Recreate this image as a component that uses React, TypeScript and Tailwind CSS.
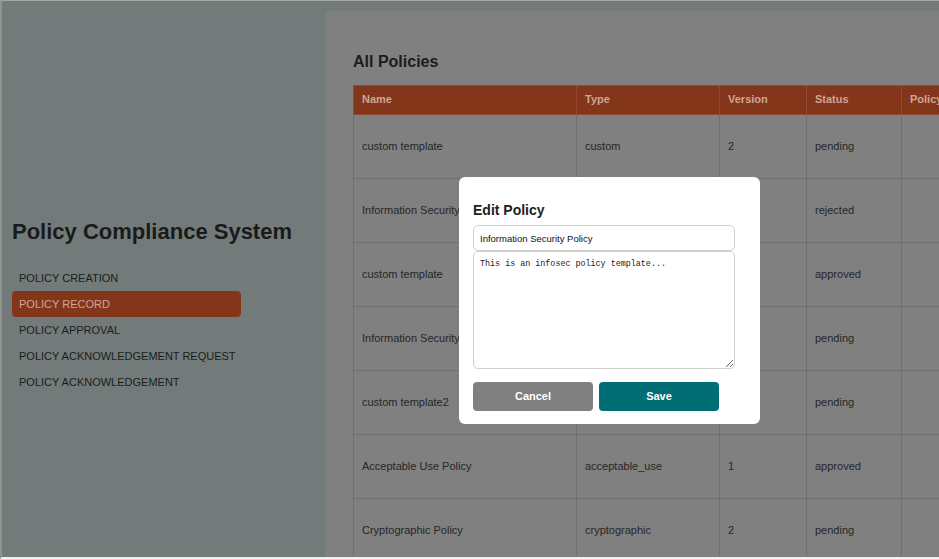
import React from "react";

const rows = [
  { name: "custom template", type: "custom", version: "2", status: "pending" },
  { name: "Information Security Policy", type: "information_security", version: "1", status: "rejected" },
  { name: "custom template", type: "custom", version: "1", status: "approved" },
  { name: "Information Security Policy", type: "information_security", version: "2", status: "pending" },
  { name: "custom template2", type: "custom", version: "1", status: "pending" },
  { name: "Acceptable Use Policy", type: "acceptable_use", version: "1", status: "approved" },
  { name: "Cryptographic Policy", type: "cryptographic", version: "2", status: "pending" },
];

const nav = [
  "POLICY CREATION",
  "POLICY RECORD",
  "POLICY APPROVAL",
  "POLICY ACKNOWLEDGEMENT REQUEST",
  "POLICY ACKNOWLEDGEMENT",
];

export default function App() {
  return (
    <div
      className="relative flex w-[939px] h-[559px] overflow-hidden bg-[#737b7a] border-t border-t-[#a3a7a6] border-l-2 border-l-[#8e9392] border-b-2 border-b-[#f0f0f0]"
      style={{ fontFamily: '"Liberation Sans", Arial, sans-serif' }}
    >
      {/* Sidebar */}
      <aside className="w-[323px] shrink-0 pl-[10px] pt-[218px]">
        <h1 className="text-[22px] leading-[26px] font-bold text-[#1a1a1a] whitespace-nowrap">
          Policy Compliance System
        </h1>
        <nav className="mt-[20px] flex flex-col">
          {nav.map((item) => (
            <div
              key={item}
              className={
                item === "POLICY RECORD"
                  ? "w-[229px] h-[26px] flex items-center px-[7px] rounded-[4px] bg-[#84361b] text-[11px] text-[#cfa596] whitespace-nowrap"
                  : "w-[229px] h-[26px] flex items-center px-[7px] text-[11px] text-[#1c1c1c] whitespace-nowrap"
              }
            >
              {item}
            </div>
          ))}
        </nav>
      </aside>

      {/* Main panel */}
      <main className="mt-[10px] flex-1 min-w-0 bg-[#808080] rounded-tl-[6px] overflow-hidden pl-[28px] pt-[42px]">
        <h2 className="text-[16px] leading-[18px] font-bold text-[#1c1c1c] mb-[14px]">All Policies</h2>
        <table className="table-fixed border-collapse w-[780px] text-[11px]">
          <colgroup>
            <col className="w-[223px]" />
            <col className="w-[143px]" />
            <col className="w-[87px]" />
            <col className="w-[95px]" />
            <col className="w-[232px]" />
          </colgroup>
          <thead>
            <tr className="h-[29px] bg-[#84361b]">
              {["Name", "Type", "Version", "Status", "Policy"].map((h) => (
                <th
                  key={h}
                  className="border border-[#934a30] px-[8px] pb-[2px] text-left font-bold text-[#cfa596] whitespace-nowrap"
                >
                  {h}
                </th>
              ))}
            </tr>
          </thead>
          <tbody>
            {rows.map((r, i) => (
              <tr key={i} className="h-[64px]">
                <td className="border border-[#6f6f6f] px-[8px] text-[#262626] whitespace-nowrap overflow-hidden">{r.name}</td>
                <td className="border border-[#6f6f6f] px-[8px] text-[#262626] whitespace-nowrap overflow-hidden">{r.type}</td>
                <td className="border border-[#6f6f6f] px-[8px] text-[#262626]">{r.version}</td>
                <td className="border border-[#6f6f6f] px-[8px] text-[#262626]">{r.status}</td>
                <td className="border border-[#6f6f6f] px-[8px] text-[#262626]"></td>
              </tr>
            ))}
          </tbody>
        </table>
      </main>

      {/* Modal */}
      <div className="absolute left-[457px] top-[176px] w-[301px] h-[247px] bg-white rounded-[6px] pl-[14px] pt-[25px]">
        <h3 className="text-[14px] leading-[16px] font-bold text-[#222] mb-[7px]">Edit Policy</h3>
        <input
          readOnly
          value="Information Security Policy"
          className="block w-[262px] h-[26px] border border-[#d0d0d0] rounded-[5px] px-[6px] text-[9.5px] text-[#111] outline-none"
          style={{ fontFamily: '"Liberation Sans", Arial, sans-serif' }}
        />
        <textarea
          readOnly
          value="This is an infosec policy template..."
          className="block w-[262px] h-[118px] border border-[#d0d0d0] rounded-[5px] px-[6px] pt-[6px] text-[8.4px] leading-[12px] text-[#222] outline-none"
          style={{ fontFamily: '"Liberation Mono", "DejaVu Sans Mono", monospace' }}
        />
        <div className="mt-[13px] flex gap-[6px]">
          <button className="w-[120px] h-[29px] rounded-[4px] bg-[#808080] text-white text-[11px] font-bold">
            Cancel
          </button>
          <button className="w-[120px] h-[29px] rounded-[4px] bg-[#006e74] text-white text-[11px] font-bold">
            Save
          </button>
        </div>
      </div>
    </div>
  );
}
